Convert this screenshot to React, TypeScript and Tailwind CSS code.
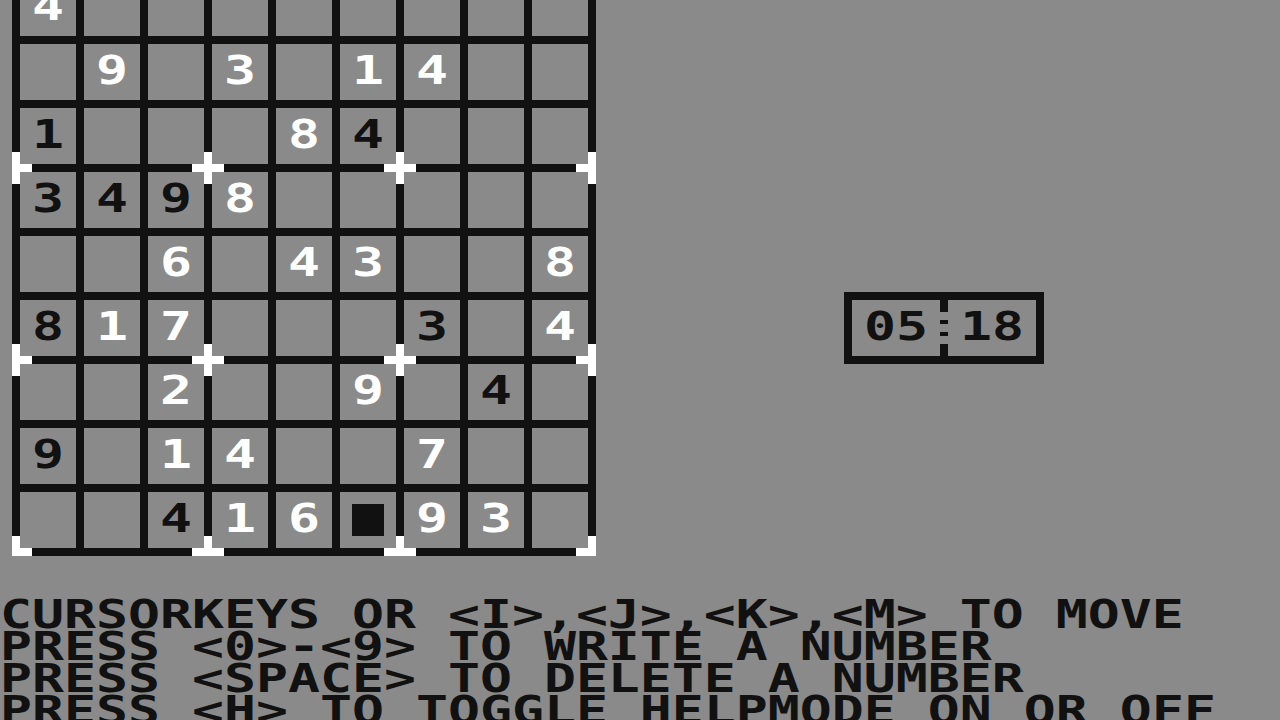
import React from "react";

type Cell = { d?: string; w?: boolean; cursor?: boolean } | null;

const W = (d: string): Cell => ({ d, w: true });
const B = (d: string): Cell => ({ d, w: false });
const _ = null;

const board: Cell[][] = [
  [W("4"), _, _, _, _, _, _, _, _],
  [_, W("9"), _, W("3"), _, W("1"), W("4"), _, _],
  [B("1"), _, _, _, W("8"), B("4"), _, _, _],
  [B("3"), B("4"), B("9"), W("8"), _, _, _, _, _],
  [_, _, W("6"), _, W("4"), W("3"), _, _, W("8")],
  [B("8"), W("1"), W("7"), _, _, _, B("3"), _, W("4")],
  [_, _, W("2"), _, _, W("9"), _, B("4"), _],
  [B("9"), _, W("1"), W("4"), _, _, W("7"), _, _],
  [_, _, B("4"), W("1"), W("6"), { cursor: true }, W("9"), W("3"), _],
];

// white junction markers, relative to grid box origin: [left, top, width, height]
const marks: [number, number, number, number][] = [
  // row boundary at rel y 192-200
  [0, 180, 8, 32], [8, 192, 12, 8],
  [180, 192, 32, 8], [192, 180, 8, 32],
  [372, 192, 32, 8], [384, 180, 8, 32],
  [576, 180, 8, 32], [564, 192, 12, 8],
  // row boundary at rel y 384-392
  [0, 372, 8, 32], [8, 384, 12, 8],
  [180, 384, 32, 8], [192, 372, 8, 32],
  [372, 384, 32, 8], [384, 372, 8, 32],
  [576, 372, 8, 32], [564, 384, 12, 8],
  // bottom line rel y 576-584
  [0, 564, 8, 20], [8, 576, 12, 8],
  [180, 576, 32, 8], [192, 564, 8, 12],
  [372, 576, 32, 8], [384, 564, 8, 12],
  [576, 564, 8, 20], [564, 576, 12, 8],
];

function Glyphs({ text, white }: { text: string; white?: boolean }) {
  return (
    <div className="h-[32px] whitespace-pre">
      <div
        className={
          "origin-top scale-y-[0.7226] translate-y-[3px] font-['DejaVu_Sans_Mono',monospace] font-bold text-[53.15px] leading-[32px] " +
          (white ? "text-white" : "text-[#111111]")
        }
      >
        {text}
      </div>
    </div>
  );
}

function Grid() {
  return (
    <div className="relative grid grid-cols-[repeat(9,56px)] grid-rows-[repeat(9,56px)] gap-[8px] bg-[#111111] p-[8px]">
      {board.flat().map((c, i) => (
        <div key={i} className="flex items-center justify-center bg-[#8a8a8a]">
          <div className="h-[32px] w-[32px]">
            {c && c.cursor ? (
              <div className="h-[32px] w-[32px] bg-[#111111]" />
            ) : c && c.d ? (
              <Glyphs text={c.d} white={c.w} />
            ) : null}
          </div>
        </div>
      ))}
      {marks.map(([l, t, w, h], i) => (
        <div
          key={"m" + i}
          className="absolute bg-white"
          style={{ left: l, top: t, width: w, height: h }}
        />
      ))}
    </div>
  );
}

function Timer() {
  return (
    <div className="ml-[248px] mt-[320px] box-border flex h-[72px] w-[200px] border-[8px] border-[#111111] px-[12px]">
      <div className="flex items-center">
        <div className="w-[64px]">
          <Glyphs text="05" />
        </div>
      </div>
      <div className="flex w-[32px] flex-col items-center">
        <div className="h-[12px] w-[8px] bg-[#111111]" />
        <div className="h-[8px] w-[8px]" />
        <div className="h-[4px] w-[8px] bg-[#111111]" />
        <div className="h-[8px] w-[8px]" />
        <div className="h-[4px] w-[8px] bg-[#111111]" />
        <div className="h-[8px] w-[8px]" />
        <div className="h-[12px] w-[8px] bg-[#111111]" />
      </div>
      <div className="flex items-center">
        <div className="w-[64px]">
          <Glyphs text="18" />
        </div>
      </div>
    </div>
  );
}

export default function App() {
  const lines = [
    "CURSORKEYS OR <I>,<J>,<K>,<M> TO MOVE",
    "PRESS <0>-<9> TO WRITE A NUMBER",
    "PRESS <SPACE> TO DELETE A NUMBER",
    "PRESS <H> TO TOGGLE HELPMODE ON OR OFF",
  ];
  return (
    <div className="h-[720px] w-[1280px] overflow-hidden bg-[#8a8a8a]">
      <div className="-mt-[28px] flex items-start pl-[12px]">
        <Grid />
        <Timer />
      </div>
      <div className="mt-[44px] flex flex-col">
        {lines.map((l, i) => (
          <Glyphs key={i} text={l} />
        ))}
      </div>
    </div>
  );
}
